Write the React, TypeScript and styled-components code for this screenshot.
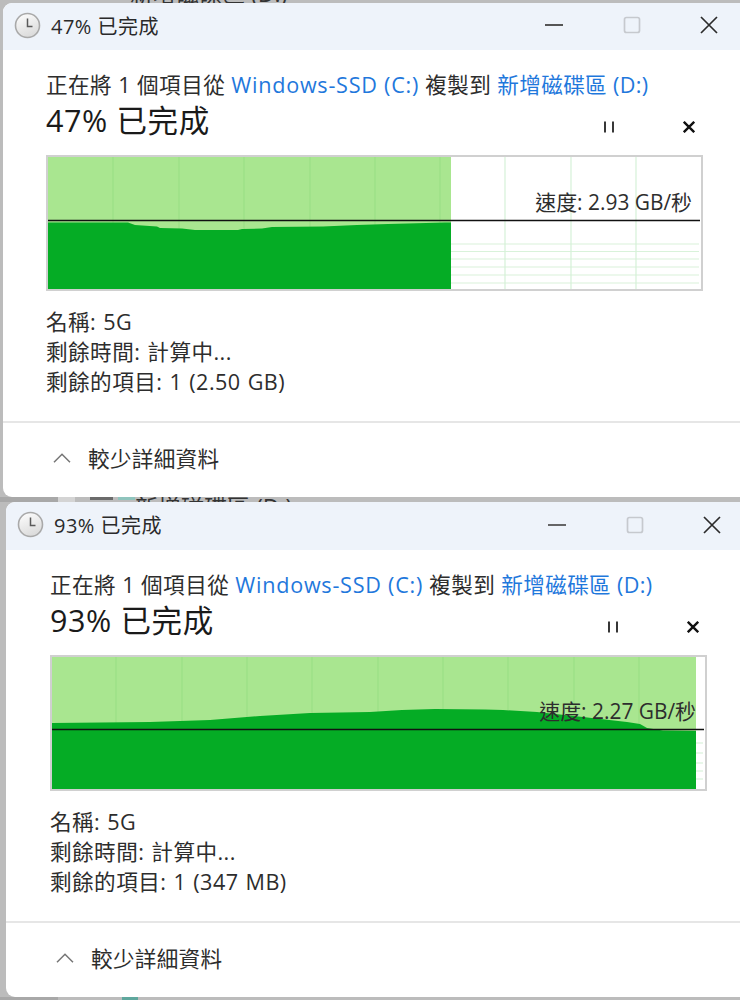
import React from "react";
import styled, { createGlobalStyle } from "styled-components";

const Global = createGlobalStyle`
  html, body { margin: 0; padding: 0; background: #bcbcbc; }
  body { width: 740px; height: 1000px; overflow: hidden; }
  #root { width: 740px; height: 1000px; overflow: hidden; }
`;

const FONT = `"Open Sans", "Noto Sans", "Noto Sans CJK TC", sans-serif`;

const Desktop = styled.div`
  width: 740px;
  height: 1000px;
  display: flex;
  flex-direction: column;
  overflow: hidden;
  background: #bcbcbc;
  font-family: ${FONT};
  color: #262626;
`;

const Sliver = styled.div<{ $h: number }>`
  height: ${(p) => p.$h}px;
  flex: none;
  overflow: hidden;
  display: flex;
  align-items: flex-end;
  font-size: 23px;
  color: #333;
  background: #bcbcbc;
`;

const SliverEdge = styled.div`
  flex: none;
  width: 58px;
  align-self: stretch;
  background: #a8a8a8;
`;

const SliverPale = styled.div`
  flex: none;
  width: 17px;
  align-self: stretch;
  background: #d4d4d4;
`;

const SliverBar = styled.div<{ $w: number; $gap: number; $color: string }>`
  flex: none;
  align-self: flex-start;
  height: 3px;
  width: ${(p) => p.$w}px;
  margin-left: ${(p) => p.$gap}px;
  background: ${(p) => p.$color};
`;

const SliverText = styled.span<{ $shift: number; $gap: number }>`
  display: block;
  line-height: 4px;
  margin-left: ${(p) => p.$gap}px;
  margin-bottom: ${(p) => p.$shift}px;
  white-space: nowrap;
`;

const Win = styled.section<{ $inset: number; $h: number }>`
  flex: none;
  box-sizing: border-box;
  height: ${(p) => p.$h}px;
  width: 760px;
  margin-left: ${(p) => p.$inset}px;
  display: flex;
  flex-direction: column;
  background: #fff;
  border-radius: 9px 0 0 9px;
  overflow: hidden;
`;

const TitleBar = styled.header<{ $h: number }>`
  flex: none;
  height: ${(p) => p.$h}px;
  width: 740px;
  box-sizing: border-box;
  padding: 0 25px 3px 11px;
  display: flex;
  align-items: center;
  background: #eef3fa;
`;

const TitleText = styled.span`
  margin-left: 10px;
  font-size: 20px;
  letter-spacing: 0.5px;
  color: #2a2a2a;
  white-space: nowrap;
`;

const WinButtons = styled.div`
  margin-left: auto;
  width: 173px;
  display: flex;
  align-items: center;
  justify-content: space-between;
`;

const Main = styled.div<{ $left: number }>`
  flex: none;
  width: 657px;
  margin-left: ${(p) => p.$left}px;
  padding-top: 20px;
`;

const Source = styled.div`
  font-size: 21.6px;
  letter-spacing: 0.45px;
  line-height: 30px;
  white-space: nowrap;
  color: #2d2d2d;
`;

const Link = styled.span<{ $wide?: boolean }>`
  color: #1f78dc;
  letter-spacing: ${(p) => (p.$wide ? "0.75px" : "0.35px")};
`;

const HeadingRow = styled.div`
  height: 40px;
  display: flex;
  align-items: center;
  justify-content: space-between;
`;

const Heading = styled.h1`
  margin: 0;
  font-size: 30.5px;
  letter-spacing: 0.6px;
  font-weight: 400;
  line-height: 40px;
  color: #1a1a1a;
  white-space: nowrap;
`;

const Controls = styled.div`
  display: flex;
  align-items: center;
  gap: 68px;
  padding: 14px 8px 0 0;
`;

const GraphBox = styled.div`
  position: relative;
  box-sizing: border-box;
  width: 657px;
  height: 136px;
  margin-top: 15px;
  border: 2px solid #d0d0d0;
  background: #fff;
`;

const GraphSvg = styled.svg`
  display: block;
  width: 653px;
  height: 132px;
`;

const Speed = styled.span<{ $top: number }>`
  position: absolute;
  top: ${(p) => p.$top}px;
  right: 9px;
  font-size: 20.9px;
  line-height: 30px;
  white-space: nowrap;
  color: #2d2d2d;
`;

const Details = styled.div`
  margin-top: 16px;
  font-size: 21.6px;
  letter-spacing: 0.45px;
  word-spacing: 1px;
  line-height: 30px;
  color: #2d2d2d;
`;

const DetailLine = styled.div`
  white-space: nowrap;
`;

const Footer = styled.footer`
  flex: 1;
  width: 740px;
  margin-top: 24px;
  box-sizing: border-box;
  border-top: 2px solid #e6e6e6;
  padding: 0 0 5px 50px;
  display: flex;
  align-items: center;
  gap: 17px;
  font-size: 21.6px;
  letter-spacing: 0.3px;
  color: #2d2d2d;
`;

const Clock = () => (
  <svg width="27" height="27" viewBox="0 0 27 27">
    <defs>
      <linearGradient id="clockFace" x1="0" y1="0" x2="0.4" y2="1">
        <stop offset="0" stopColor="#ffffff" />
        <stop offset="1" stopColor="#dcdcdc" />
      </linearGradient>
    </defs>
    <circle cx="13.5" cy="13.5" r="12" fill="url(#clockFace)" stroke="#a9a9a9" strokeWidth="1.6" />
    <path d="M13.5 6.5V14.5H18.5" fill="none" stroke="#5a5a5a" strokeWidth="1.5" />
  </svg>
);

const MinIcon = () => (
  <svg width="18" height="18" viewBox="0 0 18 18">
    <path d="M0 9H18" stroke="#555" strokeWidth="1.8" />
  </svg>
);
const MaxIcon = () => (
  <svg width="18" height="18" viewBox="0 0 18 18">
    <rect x="1.5" y="1.5" width="15" height="15" rx="2" fill="none" stroke="#c6c9ce" strokeWidth="1.7" />
  </svg>
);
const CloseIcon = () => (
  <svg width="18" height="18" viewBox="0 0 18 18">
    <path d="M1 1L17 17M17 1L1 17" stroke="#2b2b2b" strokeWidth="1.7" />
  </svg>
);
const PauseIcon = () => (
  <svg width="12" height="12" viewBox="0 0 12 12">
    <path d="M2 0.5V11.5M10 0.5V11.5" stroke="#222" strokeWidth="1.8" />
  </svg>
);
const StopIcon = () => (
  <svg width="12" height="12" viewBox="0 0 12 12">
    <path d="M0.8 0.8L11.2 11.2M11.2 0.8L0.8 11.2" stroke="#111" strokeWidth="2.4" />
  </svg>
);
const Chevron = () => (
  <svg width="18" height="10" viewBox="0 0 18 10">
    <path d="M1 9.3L9 1.2L17 9.3" fill="none" stroke="#777" strokeWidth="1.5" />
  </svg>
);

type Pt = [number, number];

type GraphData = {
  fillEnd: number;
  lineY: number;
  curve: Pt[];
  vLines: number[];
  hLines: number[];
};

const W = 653;
const H = 132;

const Graph = ({ data, speed, speedTop }: { data: GraphData; speed: string; speedTop: number }) => {
  const { fillEnd, lineY, curve, vLines, hLines } = data;
  const poly = [...curve, [fillEnd, H] as Pt, [0, H] as Pt].map((p) => p.join(",")).join(" ");
  return (
    <GraphBox>
      <GraphSvg viewBox={`0 0 ${W} ${H}`}>
        <rect x="0" y="0" width={fillEnd} height={H} fill="#a9e690" />
        {hLines.map((y) => (
          <line key={y} x1={fillEnd} x2={W - 2} y1={y} y2={y} stroke="#d9f2da" strokeWidth="1.2" />
        ))}
        {vLines.map((x) => (
          <line
            key={x}
            x1={x}
            x2={x}
            y1="0"
            y2={H}
            stroke={x < fillEnd ? "#9bdf86" : "#d6f1d8"}
            strokeWidth="1.2"
          />
        ))}
        <polygon points={poly} fill="#05ac25" />
        <line x1="0" x2={W - 1} y1={lineY} y2={lineY} stroke="#111" strokeWidth="1.5" />
      </GraphSvg>
      <Speed $top={speedTop}>{speed}</Speed>
    </GraphBox>
  );
};

const g1: GraphData = {
  fillEnd: 403,
  lineY: 63.5,
  vLines: [65, 131, 196, 262, 327, 392, 457, 523, 588],
  hLines: [87, 94.5, 102, 110, 118, 126],
  curve: [
    [0, 65.5], [80, 65.5], [87, 68], [109, 69.5], [112, 71], [134, 71.5], [147, 73], [190, 73],
    [194, 72], [214, 71.5], [224, 70], [275, 69.5], [309, 68], [340, 67], [397, 65.5], [403, 65.5],
  ],
};

const g2: GraphData = {
  fillEnd: 644,
  lineY: 72.5,
  vLines: [64, 130, 195, 260, 326, 391, 456, 522, 587],
  hLines: [86, 96, 106, 114, 122],
  curve: [
    [0, 66], [98, 65], [158, 63], [208, 59], [258, 56], [318, 55], [350, 53], [383, 52], [433, 52.5],
    [451, 53], [485, 55], [531, 60], [575, 65], [588, 67], [595, 71], [611, 73.5], [644, 74],
  ],
};

const windows = [
  {
    inset: 3,
    height: 494,
    titleH: 47,
    left: 43,
    pct: "47%",
    data: g1,
    speed: "速度: 2.93 GB/秒",
    speedTop: 30,
    remaining: "1 (2.50 GB)",
  },
  {
    inset: 6,
    height: 495,
    titleH: 48,
    left: 44,
    pct: "93%",
    data: g2,
    speed: "速度: 2.27 GB/秒",
    speedTop: 39,
    remaining: "1 (347 MB)",
  },
];

export default function App() {
  return (
    <Desktop>
      <Global />
      <Sliver $h={3}>
        <SliverText $gap={130} $shift={8}>新增磁碟區 (D:)</SliverText>
      </Sliver>
      {windows.map((w, i) => (
        <React.Fragment key={w.pct}>
          <Win $inset={w.inset} $h={w.height}>
            <TitleBar $h={w.titleH}>
              <Clock />
              <TitleText>{w.pct} 已完成</TitleText>
              <WinButtons>
                <MinIcon />
                <MaxIcon />
                <CloseIcon />
              </WinButtons>
            </TitleBar>
            <Main $left={w.left}>
              <Source>
                正在將 1 個項目從 <Link $wide>Windows-SSD (C:)</Link> 複製到 <Link>新增磁碟區 (D:)</Link>
              </Source>
              <HeadingRow>
                <Heading>{w.pct} 已完成</Heading>
                <Controls>
                  <PauseIcon />
                  <StopIcon />
                </Controls>
              </HeadingRow>
              <Graph data={w.data} speed={w.speed} speedTop={w.speedTop} />
              <Details>
                <DetailLine>名稱: 5G</DetailLine>
                <DetailLine>剩餘時間: 計算中...</DetailLine>
                <DetailLine>剩餘的項目: {w.remaining}</DetailLine>
              </Details>
            </Main>
            <Footer>
              <Chevron />
              <span>較少詳細資料</span>
            </Footer>
          </Win>
          {i === 0 && (
            <Sliver $h={5}>
              <SliverEdge />
              <SliverPale />
              <SliverBar $w={23} $gap={15} $color="#6b6b6b" />
              <SliverBar $w={17} $gap={5} $color="#8fc4bd" />
              <SliverText $gap={0} $shift={-7}>新增磁碟區 (D:)</SliverText>
            </Sliver>
          )}
        </React.Fragment>
      ))}
      <Sliver $h={3}>
        <SliverEdge />
        <SliverBar $w={16} $gap={64} $color="#5fa79d" />
      </Sliver>
    </Desktop>
  );
}
